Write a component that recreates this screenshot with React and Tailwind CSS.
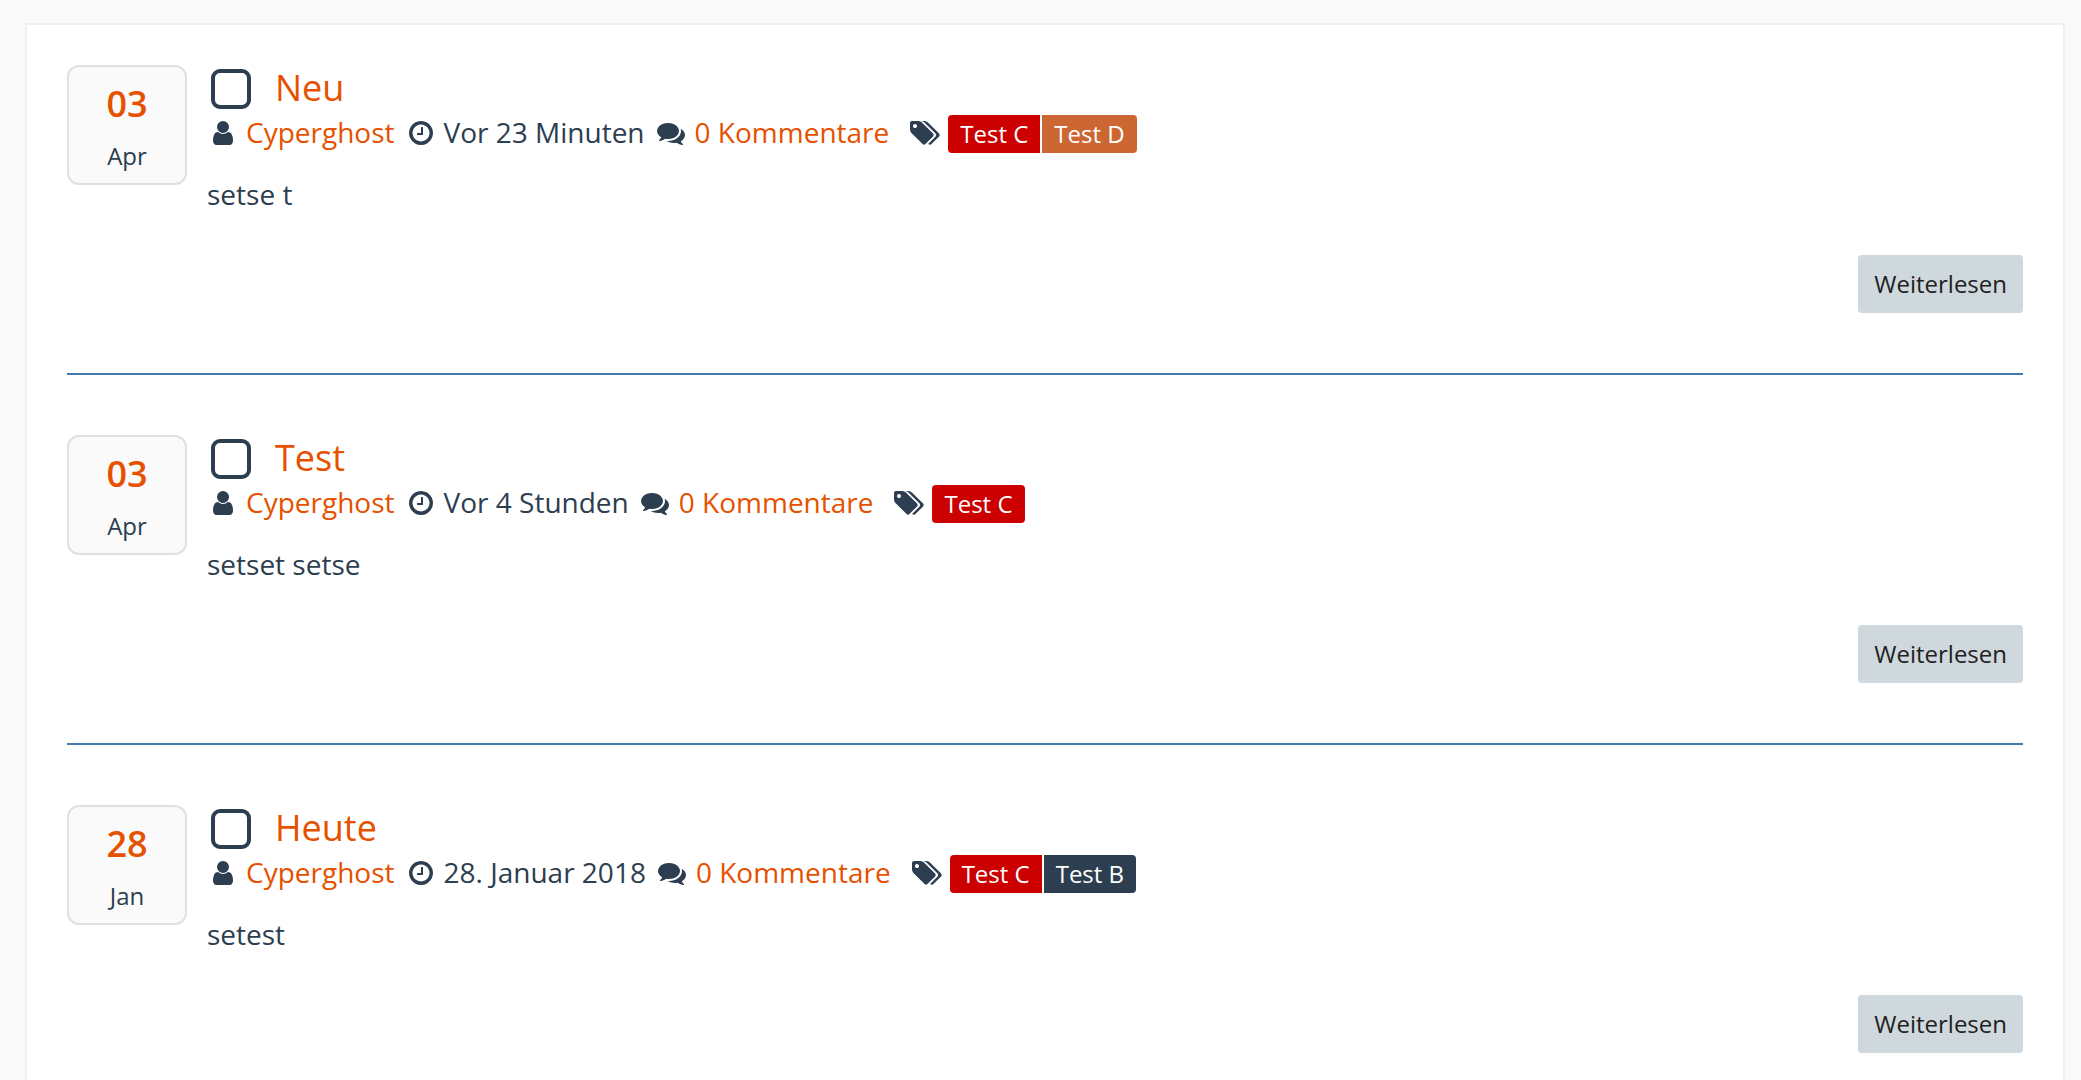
import React from 'react';

const articles = [
  {
    id: 1,
    day: '03',
    month: 'Apr',
    title: 'Neu',
    author: 'Cyperghost',
    time: 'Vor 23 Minuten',
    comments: '0 Kommentare',
    labels: [
      { name: 'Test C', color: 'bg-[#cc0000]' },
      { name: 'Test D', color: 'bg-[#cc6633]' }
    ],
    teaser: 'setse t'
  },
  {
    id: 2,
    day: '03',
    month: 'Apr',
    title: 'Test',
    author: 'Cyperghost',
    time: 'Vor 4 Stunden',
    comments: '0 Kommentare',
    labels: [{ name: 'Test C', color: 'bg-[#cc0000]' }],
    teaser: 'setset setse'
  },
  {
    id: 3,
    day: '28',
    month: 'Jan',
    title: 'Heute',
    author: 'Cyperghost',
    time: '28. Januar 2018',
    comments: '0 Kommentare',
    labels: [
      { name: 'Test C', color: 'bg-[#cc0000]' },
      { name: 'Test B', color: 'bg-[#2c3e50]' }
    ],
    teaser: 'setest'
  }
];

const UserIcon = () => (
  <svg viewBox="256 0 1280 1792" className="w-5 h-7 self-center shrink-0" fill="currentColor" aria-hidden="true">
    <path d="M1536 1399q0 109-62.5 187t-150.5 78h-854q-88 0-150.5-78t-62.5-187q0-85 8.5-160.5t31.5-152 58.5-131 94-89 134.5-34.5q131 128 313 128t313-128q76 0 134.5 34.5t94 89 58.5 131 31.5 152 8.5 160.5zm-256-887q0 159-112.5 271.5t-271.5 112.5-271.5-112.5-112.5-271.5 112.5-271.5 271.5-112.5 271.5 112.5 112.5 271.5z" />
  </svg>
);

const ClockIcon = () => (
  <svg viewBox="128 0 1536 1792" className="w-6 h-7 self-center shrink-0" fill="currentColor" aria-hidden="true">
    <path d="M1024 544v448q0 14-9 23t-23 9h-320q-14 0-23-9t-9-23v-64q0-14 9-23t23-9h224v-352q0-14 9-23t23-9h64q14 0 23 9t9 23zm416 352q0-148-73-273t-198-198-273-73-273 73-198 198-73 273 73 273 198 198 273 73 273-73 198-198 73-273zm224 0q0 209-103 385.5t-279.5 279.5-385.5 103-385.5-103-279.5-279.5-103-385.5 103-385.5 279.5-279.5 385.5-103 385.5 103 279.5 279.5 103 385.5z" />
  </svg>
);

const CommentsIcon = () => (
  <svg viewBox="0 0 1792 1792" className="w-7 h-7 self-center shrink-0" fill="currentColor" aria-hidden="true">
    <path d="M1408 768q0 139-94 257t-256.5 186.5-353.5 68.5q-86 0-176-16-124 88-278 128-36 9-86 16h-3q-11 0-20.5-8t-11.5-21q-1-3-1-6.5t.5-6.5 2-6l2.5-5 3.5-5.5 4-5 4.5-5 4-4.5q5-6 23-25t26-29.5 22.5-29 25-38.5 20.5-44q-124-72-195-177t-71-224q0-139 94-257t256.5-186.5 353.5-68.5 353.5 68.5 256.5 186.5 94 257zm384 256q0 120-71 224.5t-195 176.5q10 24 20.5 44t25 38.5 22.5 29 26 29.5 23 25q1 1 4 4.5t4.5 5 4 5 3.5 5.5l2.5 5 2 6 .5 6.5-1 6.5q-3 14-13 22t-22 7q-50-7-86-16-154-40-278-128-90 16-176 16-271 0-472-132 58 4 88 4 161 0 309-45t264-129q125-92 192-212t67-254q0-77-23-152 129 71 204 178t75 230z" />
  </svg>
);

const TagsIcon = () => (
  <svg viewBox="0 0 1920 1792" className="w-[30px] h-7 self-center shrink-0" fill="currentColor" aria-hidden="true">
    <path d="M448 448q0-53-37.5-90.5t-90.5-37.5-90.5 37.5-37.5 90.5 37.5 90.5 90.5 37.5 90.5-37.5 37.5-90.5zm1067 576q0 53-37 90l-491 492q-39 37-91 37-53 0-90-37l-715-716q-38-37-64.5-101t-26.5-117v-416q0-52 38-90t90-38h416q53 0 117 26.5t102 64.5l715 714q37 39 37 91zm384 0q0 53-37 90l-491 492q-39 37-91 37-36 0-59-14t-53-45l470-470q37-37 37-90 0-52-37-91l-715-714q-38-38-102-64.5t-117-26.5h224q53 0 117 26.5t102 64.5l715 714q37 39 37 91z" />
  </svg>
);

const Article = ({ article }) => (
  <article className="flex gap-5 pb-[60px] border-b-2 border-[#4479b0] last:pb-0 last:border-b-0">
    <div className="w-[120px] h-[120px] shrink-0 pt-[17px] bg-[#fafafa] border-2 border-[#e0e0e0] rounded-xl text-center">
      <div className="text-[36px] leading-10 font-semibold text-[#e65100]">{article.day}</div>
      <div className="mt-4 text-2xl leading-8">{article.month}</div>
    </div>

    <div className="flex-1 min-w-0">
      <div className="flex items-center h-12 pl-1 gap-6">
        <input
          type="checkbox"
          aria-label={`${article.title} markieren`}
          className="appearance-none w-10 h-10 shrink-0 border-4 border-[#2c3e50] rounded-[9px] bg-white checked:bg-[#2c3e50]"
        />
        <h2 className="pb-[2px] text-[36px] leading-[46px]">
          <a href="#" className="text-[#e65100] hover:underline">{article.title}</a>
        </h2>
      </div>

      <div className="flex items-baseline min-h-10 pl-[6px] text-[28px] leading-[38px] whitespace-nowrap">
        <UserIcon />
        <a href="#" className="ml-[13px] mr-[14px] text-[#e65100] hover:underline">{article.author}</a>
        <ClockIcon />
        <time className="ml-[11px] mr-3">{article.time}</time>
        <CommentsIcon />
        <a href="#" className="ml-[10px] mr-[21px] text-[#e65100] hover:underline">{article.comments}</a>
        <TagsIcon />
        <div className="flex gap-[2px] ml-2 rounded overflow-hidden">
          {article.labels.map((label) => (
            <a key={label.name} href="#" className={`px-3 text-2xl leading-[38px] text-white ${label.color}`}>
              {label.name}
            </a>
          ))}
        </div>
      </div>

      <p className="mt-[21px] text-[28px] leading-10">{article.teaser}</p>

      <div className="flex justify-end mt-[41px]">
        <button type="button" className="h-[58px] px-4 rounded bg-[#cfd8dc] hover:bg-[#b0bec5] text-2xl text-[#212121]">
          Weiterlesen
        </button>
      </div>
    </div>
  </article>
);

export default function App() {
  return (
    <div className="flex flex-col min-h-screen bg-[#fafafa] pt-[23px] pl-[25px] pr-4 font-['Open_Sans',sans-serif] text-[#2c3e50]">
      <main className="flex flex-col flex-1 gap-[60px] px-10 pt-10 bg-white border-2 border-b-0 border-[#ecf1f7]">
        {articles.map((article) => (
          <Article key={article.id} article={article} />
        ))}
      </main>
    </div>
  );
}
